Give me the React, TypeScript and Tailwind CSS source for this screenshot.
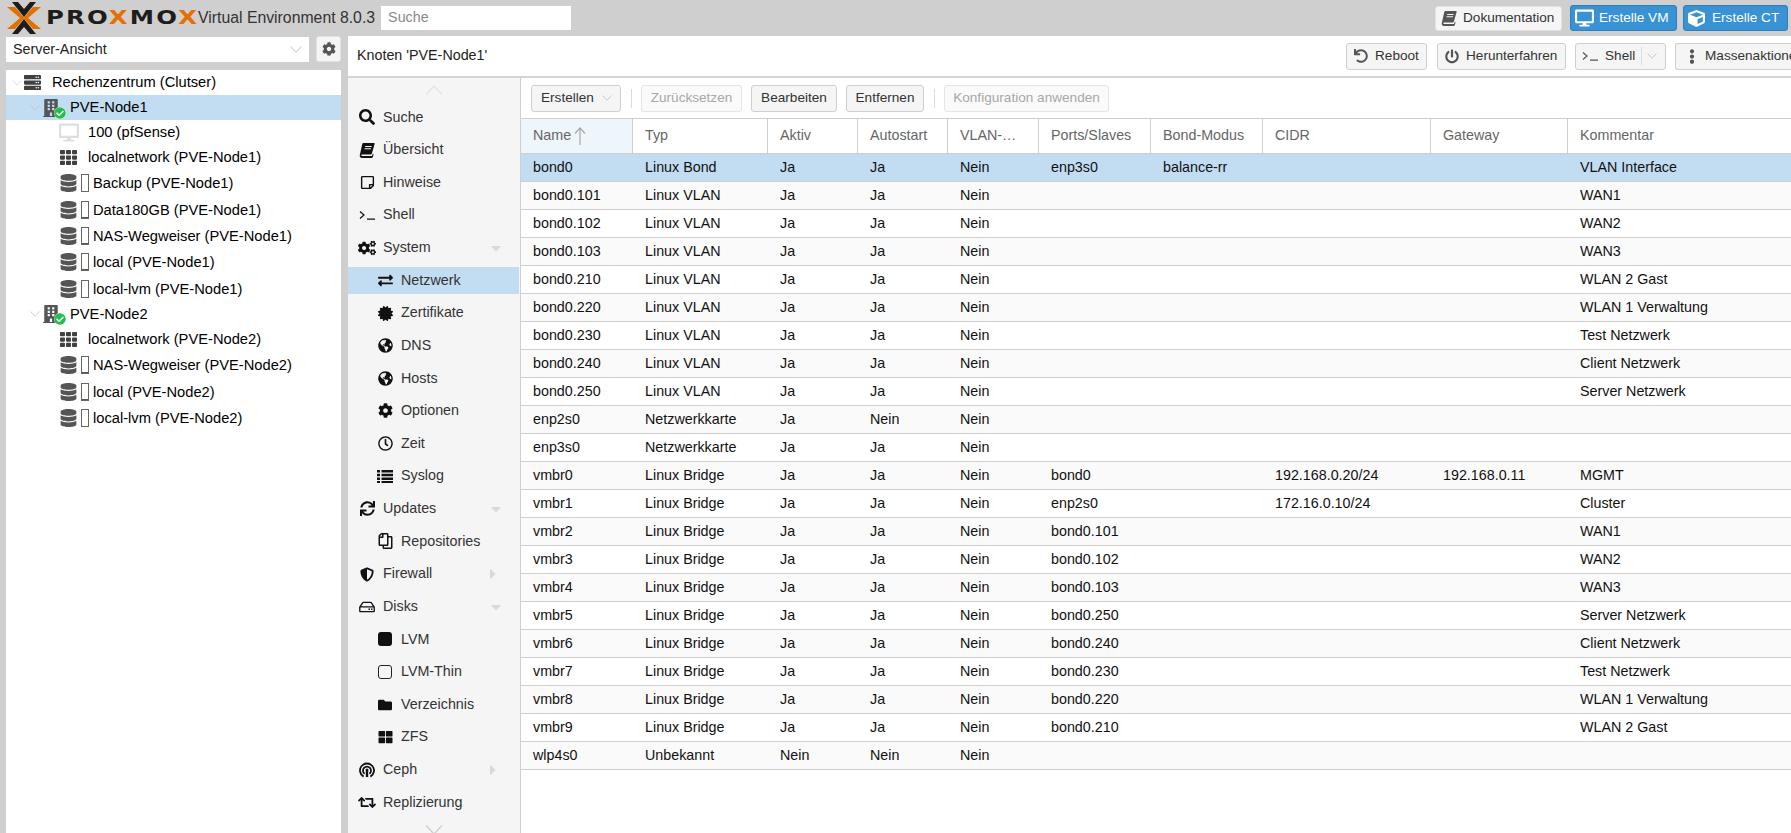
import type { ReactNode } from "react";
import {
  FaCertificate, FaCheckCircle, FaCog, FaCogs, FaCube, FaDatabase,
  FaDesktop, FaEllipsisV, FaExchangeAlt, FaFolder, FaGlobeAmericas, FaPowerOff, FaRegClock, FaRegCopy, FaRegHdd,
  FaRegStickyNote, FaRetweet, FaSearch, FaServer, FaShieldAlt, FaSync, FaTh, FaThLarge,
  FaUndo, FaBuilding, FaCaretDown, FaCaretRight,
} from "react-icons/fa";

function ShellIcon() {
  return (
    <svg viewBox="0 0 16 10" className="w-[16px] h-[10px] shrink-0" fill="none" stroke="currentColor" strokeWidth="1.2">
      <path d="M1 1.5 5 5 1 8.5M8 9.2h8" />
    </svg>
  );
}

function CephIcon() {
  return (
    <svg viewBox="0 0 16 16" className="w-[16px] h-[16px]" fill="none" stroke="currentColor" strokeWidth="1.8">
      <path d="M4.6 14.6a7 7 0 1 1 6.8 0" />
      <path d="M5.6 11.8a4 4 0 1 1 4.8 0" />
      <circle cx="8" cy="8" r="1.5" fill="currentColor" stroke="none" />
      <path d="M8 9v6" strokeWidth="2.4" />
    </svg>
  );
}

// slanted FontAwesome 4 style book
function BookIcon({ className }: { className: string }) {
  return (
    <svg viewBox="0 0 16 16" className={className} fill="currentColor">
      <path d="M4.6 1h10.2c.7 0 1 .5.8 1.1l-2.7 9.4c-.2.7-.7 1-1.4 1H3.1c-.7 0-1 .7-.8 1.1.2.3.5.5 1 .5h9.1c.4 0 .6-.2.8-.6l.5-1.7.9.4-.7 2.5c-.2.7-.8 1.3-1.6 1.3H3c-1.4 0-2.6-1.3-2.2-3L3.2 2.2C3.4 1.5 3.9 1 4.6 1z" />
      <path d="M6.3 4h6.4l-.2.9H6zM5.7 6.3h6.4l-.2.9H5.4z" fill="#f5f5f5" />
    </svg>
  );
}

function ListIcon() {
  return (
    <svg viewBox="0 0 16 14" className="w-[16px] h-[14px]" fill="currentColor">
      <path d="M0 1h3v2.4H0zM4.5 1H16v2.4H4.5zM0 4.8h3v2.4H0zM4.5 4.8H16v2.4H4.5zM0 8.6h3V11H0zM4.5 8.6H16V11H4.5zM0 12h3v2H0zM4.5 12H16v2H4.5z" />
    </svg>
  );
}

function Chevron({ up, className }: { up?: boolean; className: string }) {
  return (
    <svg viewBox="0 0 18 10" className={className} fill="none" stroke="currentColor" strokeWidth="1.4">
      <path d={up ? "M1 9.5 9 1l8 8.5" : "M1 .5 9 9l8-8.5"} />
    </svg>
  );
}

function ProxmoxLogo() {
  return (
    <div className="flex items-center ml-[7px] w-[191px] shrink-0">
      <svg viewBox="0 0 34 32" className="w-[34px] h-[32px] shrink-0">
        <path d="M0 5h8l9 10.5L26 5h8L21 16l13 11h-8l-9-10.5L8 27H0l13-11z" fill="#e57000" />
        <path d="M5 0h6l6 7 6-7h6L17 15zM5 32h6l6-7 6 7h6L17 17z" fill="#1d1d1b" />
      </svg>
      <span className="ml-[5px] origin-left scale-x-125 font-['DejaVu_Sans',sans-serif] font-bold text-[19.5px] tracking-[1.7px] text-[#1d1d1b] leading-none">
        PRO<span className="text-[#e57000]">X</span>MO<span className="text-[#e57000]">X</span>
      </span>
    </div>
  );
}

function ToolBtn({ icon, children, className = "" }: { icon?: ReactNode; children: ReactNode; className?: string }) {
  return (
    <div className={`shrink-0 flex items-center rounded-[3px] border text-[13.6px] whitespace-nowrap ${className}`}>
      {icon}
      {children}
    </div>
  );
}

const plainBtn = "h-[27px] border-[#cfcfcf] bg-[#f5f5f5] text-[#333]";
const disabledBtn = "h-[27px] border-[#e5e5e5] bg-[#fafafa] text-[#a8a8a8]";
const blueBtn = "h-[26px] border-[#2d7fbb] bg-[#3892d4] text-white";

const treeRows: { label: string; kind: string; fill?: string }[] = [
  { label: "Rechenzentrum (Clutser)", kind: "dc" },
  { label: "PVE-Node1", kind: "node" },
  { label: "100 (pfSense)", kind: "vm" },
  { label: "localnetwork (PVE-Node1)", kind: "sdn" },
  { label: "Backup (PVE-Node1)", kind: "store", fill: "h-0" },
  { label: "Data180GB (PVE-Node1)", kind: "store", fill: "h-[1px]" },
  { label: "NAS-Wegweiser (PVE-Node1)", kind: "store", fill: "h-[1px]" },
  { label: "local (PVE-Node1)", kind: "store", fill: "h-[1px]" },
  { label: "local-lvm (PVE-Node1)", kind: "store", fill: "h-0" },
  { label: "PVE-Node2", kind: "node" },
  { label: "localnetwork (PVE-Node2)", kind: "sdn" },
  { label: "NAS-Wegweiser (PVE-Node2)", kind: "store", fill: "h-[1px]" },
  { label: "local (PVE-Node2)", kind: "store", fill: "h-[1px]" },
  { label: "local-lvm (PVE-Node2)", kind: "store", fill: "h-0" },
];

function TreeRow({ label, kind, fill, selected }: { label: string; kind: string; fill?: string; selected?: boolean }) {
  const rowBase = `flex items-center whitespace-nowrap text-[14.7px] ${selected ? "bg-[#c2ddf2]" : ""}`;
  if (kind === "dc") {
    return (
      <div className={`${rowBase} h-[25px] pl-[6px]`}>
        <Chevron className="w-[10px] h-[6px] text-[#cfcfcf]" />
        <FaServer className="w-[19px] h-[17px] text-[#404040] ml-[1px]" />
        <span className="ml-[10px]">{label}</span>
      </div>
    );
  }
  if (kind === "node") {
    return (
      <div className={`${rowBase} h-[25px]`}>
        <Chevron className="w-[10px] h-[6px] text-[#b4c6d4] ml-[24px]" />
        <div className="relative ml-[3px] w-[17px] h-[18px]">
          <FaBuilding className="w-[16px] h-[18px] text-[#555]" />
          <FaCheckCircle className="absolute -right-[6px] bottom-[-2px] w-[12px] h-[12px] text-[#21bf4b] bg-white rounded-full" />
        </div>
        <span className="ml-[10px]">{label}</span>
      </div>
    );
  }
  if (kind === "vm") {
    return (
      <div className={`${rowBase} h-[25px]`}>
        <FaDesktop className="w-[20px] h-[19px] text-[#dedede] ml-[53px]" />
        <span className="ml-[9px]">{label}</span>
      </div>
    );
  }
  if (kind === "sdn") {
    return (
      <div className={`${rowBase} h-[25px]`}>
        <FaTh className="w-[19px] h-[17px] text-[#404040] ml-[53px]" />
        <span className="ml-[10px]">{label}</span>
      </div>
    );
  }
  return (
    <div className={`${rowBase} h-[26.4px]`}>
      <FaDatabase className="w-[17px] h-[18px] text-[#555] ml-[54px]" />
      <div className="ml-[4px] w-[8px] h-[18px] border border-[#666] flex flex-col justify-end">
        <div className={`bg-[#555] ${fill}`} />
      </div>
      <span className="ml-[4px]">{label}</span>
    </div>
  );
}

const navItems: { label: string; icon: ReactNode; sub?: boolean; arrow?: "down" | "right"; active?: boolean }[] = [
  { label: "Suche", icon: <FaSearch className="w-[16px] h-[16px]" /> },
  { label: "Übersicht", icon: <BookIcon className="w-[16px] h-[16px]" /> },
  { label: "Hinweise", icon: <FaRegStickyNote className="w-[15px] h-[15px]" /> },
  { label: "Shell", icon: <ShellIcon /> },
  { label: "System", icon: <FaCogs className="w-[18px] h-[16px]" />, arrow: "down" },
  { label: "Netzwerk", icon: <FaExchangeAlt className="w-[17px] h-[15px]" />, sub: true, active: true },
  { label: "Zertifikate", icon: <FaCertificate className="w-[15px] h-[15px]" />, sub: true },
  { label: "DNS", icon: <FaGlobeAmericas className="w-[15px] h-[15px]" />, sub: true },
  { label: "Hosts", icon: <FaGlobeAmericas className="w-[15px] h-[15px]" />, sub: true },
  { label: "Optionen", icon: <FaCog className="w-[15px] h-[15px]" />, sub: true },
  { label: "Zeit", icon: <FaRegClock className="w-[15px] h-[15px]" />, sub: true },
  { label: "Syslog", icon: <ListIcon />, sub: true },
  { label: "Updates", icon: <FaSync className="w-[15px] h-[15px]" />, arrow: "down" },
  { label: "Repositories", icon: <FaRegCopy className="w-[15px] h-[16px] -scale-x-100" />, sub: true },
  { label: "Firewall", icon: <FaShieldAlt className="w-[14px] h-[15px]" />, arrow: "right" },
  { label: "Disks", icon: <FaRegHdd className="w-[16px] h-[14px]" />, arrow: "down" },
  { label: "LVM", icon: <span className="block w-[14px] h-[14px] rounded-[3px] bg-[#111]" />, sub: true },
  { label: "LVM-Thin", icon: <span className="block w-[14px] h-[14px] rounded-[3px] border border-[#222]" />, sub: true },
  { label: "Verzeichnis", icon: <FaFolder className="w-[16px] h-[14px]" />, sub: true },
  { label: "ZFS", icon: <FaThLarge className="w-[15px] h-[14px]" />, sub: true },
  { label: "Ceph", icon: <CephIcon />, arrow: "right" },
  { label: "Replizierung", icon: <FaRetweet className="w-[18px] h-[15px]" /> },
];

function NavItem({ label, icon, sub, arrow, active }: (typeof navItems)[number]) {
  return (
    <div className="h-[32.63px] shrink-0 flex items-center">
      <div className={`h-[27px] flex-1 mr-[1px] flex items-center text-[#333] ${active ? "bg-[#c2ddf2]" : ""} ${sub ? "pl-[28px]" : "pl-[10px]"}`}>
        <span className="w-[18px] flex justify-center text-[#111]">{icon}</span>
        <span className="ml-[7px]">{label}</span>
        {arrow === "down" && <FaCaretDown className="ml-auto mr-[15px] w-[16px] h-[16px] text-[#d9d9d9]" />}
        {arrow === "right" && <FaCaretRight className="ml-auto mr-[19px] w-[14px] h-[16px] text-[#d9d9d9]" />}
      </div>
    </div>
  );
}

const columns: { label: string; width: string }[] = [
  { label: "Name", width: "w-[112px]" },
  { label: "Typ", width: "w-[135px]" },
  { label: "Aktiv", width: "w-[90px]" },
  { label: "Autostart", width: "w-[90px]" },
  { label: "VLAN-…", width: "w-[91px]" },
  { label: "Ports/Slaves", width: "w-[112px]" },
  { label: "Bond-Modus", width: "w-[112px]" },
  { label: "CIDR", width: "w-[168px]" },
  { label: "Gateway", width: "w-[137px]" },
  { label: "Kommentar", width: "flex-1" },
];

const rows: string[][] = [
  ["bond0", "Linux Bond", "Ja", "Ja", "Nein", "enp3s0", "balance-rr", "", "", "VLAN Interface"],
  ["bond0.101", "Linux VLAN", "Ja", "Ja", "Nein", "", "", "", "", "WAN1"],
  ["bond0.102", "Linux VLAN", "Ja", "Ja", "Nein", "", "", "", "", "WAN2"],
  ["bond0.103", "Linux VLAN", "Ja", "Ja", "Nein", "", "", "", "", "WAN3"],
  ["bond0.210", "Linux VLAN", "Ja", "Ja", "Nein", "", "", "", "", "WLAN 2 Gast"],
  ["bond0.220", "Linux VLAN", "Ja", "Ja", "Nein", "", "", "", "", "WLAN 1 Verwaltung"],
  ["bond0.230", "Linux VLAN", "Ja", "Ja", "Nein", "", "", "", "", "Test Netzwerk"],
  ["bond0.240", "Linux VLAN", "Ja", "Ja", "Nein", "", "", "", "", "Client Netzwerk"],
  ["bond0.250", "Linux VLAN", "Ja", "Ja", "Nein", "", "", "", "", "Server Netzwerk"],
  ["enp2s0", "Netzwerkkarte", "Ja", "Nein", "Nein", "", "", "", "", ""],
  ["enp3s0", "Netzwerkkarte", "Ja", "Ja", "Nein", "", "", "", "", ""],
  ["vmbr0", "Linux Bridge", "Ja", "Ja", "Nein", "bond0", "", "192.168.0.20/24", "192.168.0.11", "MGMT"],
  ["vmbr1", "Linux Bridge", "Ja", "Ja", "Nein", "enp2s0", "", "172.16.0.10/24", "", "Cluster"],
  ["vmbr2", "Linux Bridge", "Ja", "Ja", "Nein", "bond0.101", "", "", "", "WAN1"],
  ["vmbr3", "Linux Bridge", "Ja", "Ja", "Nein", "bond0.102", "", "", "", "WAN2"],
  ["vmbr4", "Linux Bridge", "Ja", "Ja", "Nein", "bond0.103", "", "", "", "WAN3"],
  ["vmbr5", "Linux Bridge", "Ja", "Ja", "Nein", "bond0.250", "", "", "", "Server Netzwerk"],
  ["vmbr6", "Linux Bridge", "Ja", "Ja", "Nein", "bond0.240", "", "", "", "Client Netzwerk"],
  ["vmbr7", "Linux Bridge", "Ja", "Ja", "Nein", "bond0.230", "", "", "", "Test Netzwerk"],
  ["vmbr8", "Linux Bridge", "Ja", "Ja", "Nein", "bond0.220", "", "", "", "WLAN 1 Verwaltung"],
  ["vmbr9", "Linux Bridge", "Ja", "Ja", "Nein", "bond0.210", "", "", "", "WLAN 2 Gast"],
  ["wlp4s0", "Unbekannt", "Nein", "Nein", "Nein", "", "", "", "", ""],
];

function GridToolbar() {
  return (
    <div className="h-[40px] flex items-center pl-[10px] shrink-0">
      <ToolBtn className={`${plainBtn} w-[90px] pl-[9px]`}>
        Erstellen
        <Chevron className="ml-[8px] w-[10px] h-[6px] text-[#bdbdbd]" />
      </ToolBtn>
      <div className="w-px h-[19px] bg-[#dcdcdc] ml-[10px]" />
      <ToolBtn className={`${disabledBtn} w-[101px] ml-[9px] justify-center`}>Zurücksetzen</ToolBtn>
      <ToolBtn className={`${plainBtn} w-[86px] ml-[9px] justify-center`}>Bearbeiten</ToolBtn>
      <ToolBtn className={`${plainBtn} w-[78px] ml-[9px] justify-center`}>Entfernen</ToolBtn>
      <div className="w-px h-[19px] bg-[#dcdcdc] ml-[10px]" />
      <ToolBtn className={`${disabledBtn} w-[165px] ml-[9px] justify-center`}>Konfiguration anwenden</ToolBtn>
    </div>
  );
}

function NetworkGrid() {
  return (
    <div className="flex-1 min-w-0 flex flex-col bg-white">
      <GridToolbar />
      <div className="h-[36px] shrink-0 flex border-y border-[#cfcfcf] text-[#666]">
        {columns.map((col, i) => (
          <div key={col.label} className={`${col.width} flex items-center pl-[12px] border-r border-[#cfcfcf] last:border-r-0 ${i === 0 ? "bg-[#eef5fb]" : ""}`}>
            {col.label}
            {i === 0 && (
              <svg viewBox="0 0 12 18" className="ml-[3px] w-[12px] h-[18px] text-[#aaa]" fill="none" stroke="currentColor" strokeWidth="1.2">
                <path d="M6 1v17M1 6.5 6 1l5 5.5" />
              </svg>
            )}
          </div>
        ))}
      </div>
      {rows.map((row, r) => (
        <div key={row[0]} className={`h-[28px] shrink-0 flex border-b border-[#cfcfcf] text-[#111] ${r === 0 ? "bg-[#c2ddf2]" : r % 2 === 1 ? "bg-[#fafafa]" : "bg-white"}`}>
          {row.map((cell, c) => (
            <div key={c} className={`${columns[c].width} flex items-center pl-[12px] whitespace-nowrap`}>
              {cell}
            </div>
          ))}
        </div>
      ))}
    </div>
  );
}

export default function App() {
  return (
    <div className="w-[1791px] h-[833px] overflow-hidden flex flex-col bg-[#cfcfcf] font-['Liberation_Sans',Arial,sans-serif] text-[14.3px] text-black">
      {/* top bar */}
      <header className="h-[36px] shrink-0 flex items-center">
        <ProxmoxLogo />
        <span className="text-[15.8px] text-[#333] whitespace-nowrap">Virtual Environment 8.0.3</span>
        <div className="ml-[6px] w-[190px] h-[24px] bg-white flex items-center pl-[7px] text-[#8a8a8a]">Suche</div>
        <div className="ml-auto flex items-center mr-[3px]">
          <ToolBtn className="w-[127px] h-[25px] pl-[5px] border-[#e2e2e2] bg-[#f5f5f5] text-[#333]" icon={<BookIcon className="w-[16px] h-[16px] text-[#555]" />}>
            <span className="ml-[6px]">Dokumentation</span>
          </ToolBtn>
          <ToolBtn className={`${blueBtn} w-[107px] ml-[8px] pl-[4px]`} icon={<FaDesktop className="w-[19px] h-[18px]" />}>
            <span className="ml-[5px]">Erstelle VM</span>
          </ToolBtn>
          <ToolBtn className={`${blueBtn} w-[105px] ml-[6px] pl-[4px]`} icon={<FaCube className="w-[17px] h-[17px]" />}>
            <span className="ml-[7px]">Erstelle CT</span>
          </ToolBtn>
        </div>
      </header>

      <div className="flex-1 flex min-h-0">
        {/* resource tree */}
        <aside className="w-[348px] shrink-0 pl-[6px] pr-[7px] flex flex-col">
          <div className="h-[34px] shrink-0 flex items-start">
            <div className="w-[303px] h-[25px] mt-[1px] bg-white flex items-center pl-[7px] text-[#222]">
              Server-Ansicht
              <Chevron className="ml-auto mr-[7px] w-[12px] h-[7px] text-[#bdbdbd]" />
            </div>
            <div className="ml-[7px] w-[25px] h-[26px] rounded-[3px] bg-[#f5f5f5] border border-[#e2e2e2] flex items-center justify-center">
              <FaCog className="w-[14px] h-[14px] text-[#555]" />
            </div>
          </div>
          <div className="flex-1 bg-white">
            {treeRows.map((row, i) => (
              <TreeRow key={row.label} {...row} selected={i === 1} />
            ))}
          </div>
        </aside>

        {/* main panel */}
        <main className="flex-1 min-w-0 flex flex-col bg-white">
          <div className="h-[42px] shrink-0 flex items-center border-b-2 border-[#d4d4d4]">
            <span className="ml-[9px] text-[#222]">Knoten 'PVE-Node1'</span>
            <div className="ml-auto flex items-center w-[445px] overflow-hidden">
              <ToolBtn className={`${plainBtn} w-[81px] pl-[7px]`} icon={<FaUndo className="w-[14px] h-[14px] text-[#555]" />}>
                <span className="ml-[7px]">Reboot</span>
              </ToolBtn>
              <ToolBtn className={`${plainBtn} w-[129px] ml-[10px] pl-[7px]`} icon={<FaPowerOff className="w-[14px] h-[15px] text-[#555]" />}>
                <span className="ml-[7px]">Herunterfahren</span>
              </ToolBtn>
              <ToolBtn className={`${plainBtn} w-[91px] ml-[9px] pl-[6px]`} icon={<span className="text-[#555]"><ShellIcon /></span>}>
                <span className="ml-[7px]">Shell</span>
                <span className="w-px h-[18px] bg-[#dcdcdc] ml-[6px]" />
                <Chevron className="ml-[5px] w-[10px] h-[6px] text-[#bdbdbd]" />
              </ToolBtn>
              <ToolBtn className={`${plainBtn} w-[130px] ml-[9px] pl-[10px] rounded-r-none border-r-0`} icon={<FaEllipsisV className="w-[12px] h-[15px] text-[#555]" />}>
                <span className="ml-[7px]">Massenaktionen</span>
              </ToolBtn>
            </div>
          </div>
          <div className="flex-1 flex min-h-0">
            <nav className="w-[173px] shrink-0 bg-[#f5f5f5] border-r border-[#cfcfcf] flex flex-col">
              <div className="h-[23px] shrink-0 flex justify-center pt-[7px]">
                <Chevron up className="w-[18px] h-[10px] text-[#e4e4e4]" />
              </div>
              {navItems.map((item) => (
                <NavItem key={item.label} {...item} />
              ))}
              <div className="flex justify-center shrink-0">
                <Chevron className="w-[18px] h-[10px] text-[#cfcfcf] mt-[6px]" />
              </div>
            </nav>
            <NetworkGrid />
          </div>
        </main>
      </div>
    </div>
  );
}
